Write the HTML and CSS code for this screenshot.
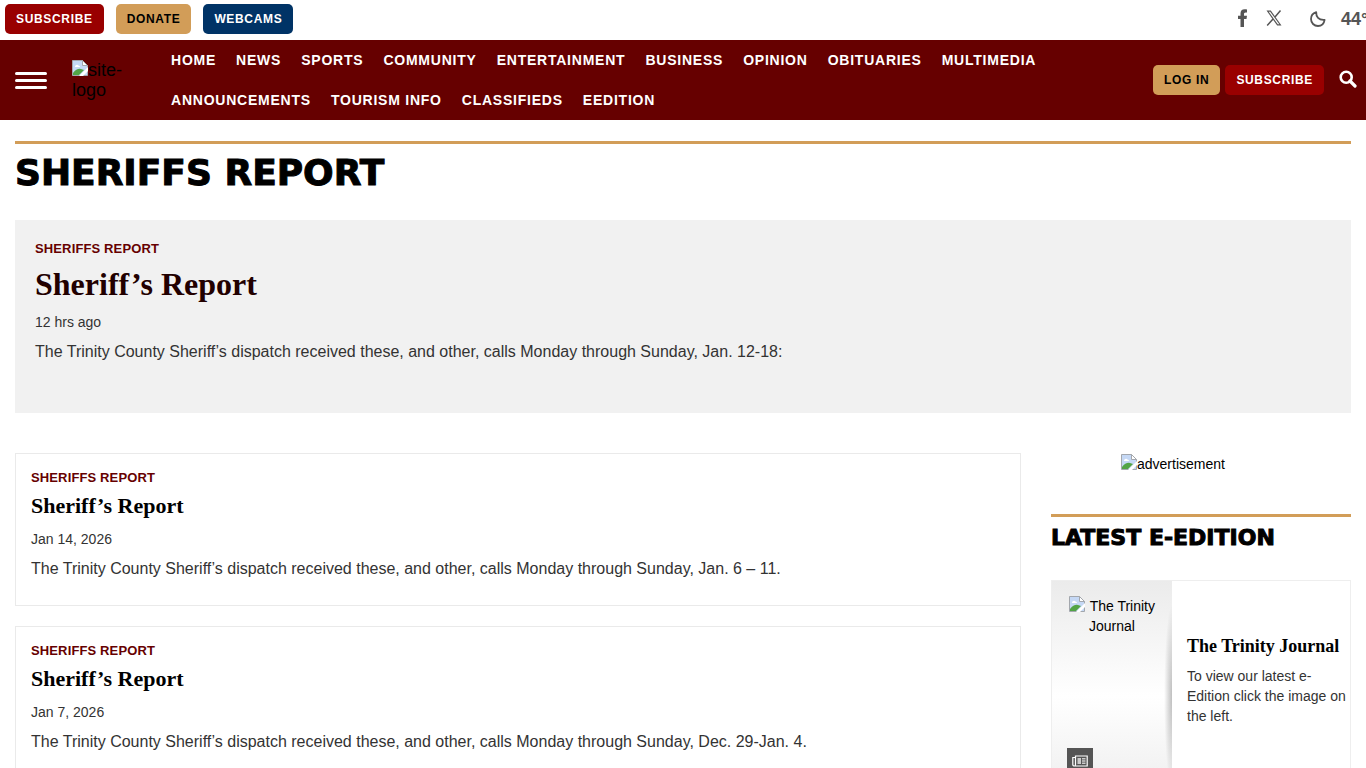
FILE: index.html
```html
<!DOCTYPE html>
<html lang="en">
<head>
<meta charset="utf-8">
<meta name="viewport" content="width=device-width, initial-scale=1">
<title>Sheriffs Report</title>
<link rel="stylesheet" href="styles.css">
</head>
<body>
<svg class="defs" aria-hidden="true">
  <symbol id="broken" viewBox="0 0 16 16">
    <path d="M.5 .5h10l5 5v10H.5z" fill="#c5d8f5" stroke="#a3a7ad"/>
    <path d="M10.500 .5v5h5z" fill="#fff" stroke="#a3a7ad"/>
    <path d="M3 7a2 2 0 0 1 3.500-1.500A1.500 1.500 0 0 1 8 7z" fill="#fff"/>
    <path d="M1 15v-2q4-5 8-4l3 1-5 5z" fill="#52a446"/>
    <path d="M7 16l9-9v4l-5 5z" fill="#fff"/>
  </symbol>
</svg>
<div class="topbar">
  <div class="topbar-links">
    <a class="btn btn-red" href="#">SUBSCRIBE</a>
    <a class="btn btn-gold" href="#">DONATE</a>
    <a class="btn btn-blue" href="#">WEBCAMS</a>
  </div>
  <div class="topbar-tools">
    <a class="social" href="#" aria-label="Facebook"><svg width="12" height="18" viewBox="0 0 12 18"><path d="M3.500 18v-8H1V6.700h2.500V4.500C3.500 1.800 5 .3 7.600.3c1.200 0 2.400.2 2.400.2v2.900H8.700c-1.300 0-1.700.8-1.700 1.600v1.700h3L9.500 10H7v8z" fill="#555"/></svg></a>
    <a class="social social-x" href="#" aria-label="X"><svg width="16" height="16" viewBox="0 0 16 16"><path d="M.5 .5h4.300L15.500 15.500h-4.300z" fill="#555"/><path d="M2.700 1.700h1.500l9.100 12.600h-1.500z" fill="#fff"/><path d="M14.500 .5 9 6.900M7 9l-5.800 6.500" fill="none" stroke="#555" stroke-width="1.500"/></svg></a>
    <svg width="16" height="16" viewBox="0 0 16 16" aria-hidden="true"><path d="M6.200 1.200C6 5.800 8.500 9.300 14.600 8.800 14 12.600 11.400 15 8 15c-3.900 0-7-3-7-6.900C1 5 3 2.200 6.200 1.200z" fill="none" stroke="#555" stroke-width="1.800" stroke-linejoin="round"/></svg>
    <span class="temp">44°</span>
  </div>
</div>
<header class="header">
  <button class="menu" type="button" aria-label="Menu"><span></span><span></span><span></span></button>
  <a class="logo" href="#"><svg width="16" height="16" aria-hidden="true"><use href="#broken"/></svg>site-logo</a>
  <nav class="nav">
    <a href="#">HOME</a><a href="#">NEWS</a><a href="#">SPORTS</a><a href="#">COMMUNITY</a><a href="#">ENTERTAINMENT</a><a href="#">BUSINESS</a><a href="#">OPINION</a><a href="#">OBITUARIES</a><a href="#">MULTIMEDIA</a><a href="#">ANNOUNCEMENTS</a><a href="#">TOURISM INFO</a><a href="#">CLASSIFIEDS</a><a href="#">EEDITION</a>
  </nav>
  <div class="account">
    <a class="btn btn-gold" href="#">LOG IN</a>
    <a class="btn btn-red" href="#">SUBSCRIBE</a>
    <button class="search" type="button" aria-label="Search"><svg width="18" height="18" viewBox="0 0 18 18"><circle cx="7.200" cy="7.200" r="5.500" fill="none" stroke="#fff" stroke-width="2.600"/><path d="M11 11l5 5" stroke="#fff" stroke-width="3.200" stroke-linecap="round"/></svg></button>
  </div>
</header>
<main class="main">
  <h1 class="page-title">SHERIFFS REPORT</h1>
  <article class="feature">
    <a class="label" href="#">SHERIFFS REPORT</a>
    <h2><a href="#">Sheriff’s Report</a></h2>
    <time>12 hrs ago</time>
    <p>The Trinity County Sheriff’s dispatch received these, and other, calls Monday through Sunday, Jan. 12-18:</p>
  </article>
  <div class="columns">
    <section class="list">
      <article class="card">
        <a class="label" href="#">SHERIFFS REPORT</a>
        <h3><a href="#">Sheriff’s Report</a></h3>
        <time>Jan 14, 2026</time>
        <p>The Trinity County Sheriff’s dispatch received these, and other, calls Monday through Sunday, Jan. 6 – 11.</p>
      </article>
      <article class="card">
        <a class="label" href="#">SHERIFFS REPORT</a>
        <h3><a href="#">Sheriff’s Report</a></h3>
        <time>Jan 7, 2026</time>
        <p>The Trinity County Sheriff’s dispatch received these, and other, calls Monday through Sunday, Dec. 29-Jan. 4.</p>
      </article>
    </section>
    <aside class="sidebar">
      <a class="ad" href="#"><svg width="16" height="16" aria-hidden="true"><use href="#broken"/></svg>advertisement</a>
      <h2 class="side-title">LATEST E-EDITION</h2>
      <div class="edition">
        <a class="cover" href="#">
          <span class="cover-alt"><svg width="16" height="16" aria-hidden="true"><use href="#broken"/></svg> The Trinity Journal</span>
          <span class="badge"><svg width="16" height="12" viewBox="0 0 16 12" aria-hidden="true"><path d="M3.500 1h11.700v10H2.500Q.8 11 .8 9.500V2.500h2.700z M3.500 2v7.500q0 1.500-1 1.500" fill="none" stroke="#fff" stroke-width="1.200"/><path d="M5.500 3h3.500v6H5.500zM10 3h3.500v1.500H10zM10 5.300h3.500v1.400H10zM10 7.500h3.500V9H10z" fill="#ccc"/></svg></span>
        </a>
        <div class="edition-text">
          <h3><a href="#">The Trinity Journal</a></h3>
          <p>To view our latest e-Edition click the image on the left.</p>
        </div>
      </div>
    </aside>
  </div>
</main>
</body>
</html>
```
FILE: styles.css
```css
* { box-sizing: border-box; }
html { overflow: hidden; }
body {
  margin: 0;
  background: #fff;
  color: #000;
  font: 14px/20px "Liberation Sans", Arial, sans-serif;
}
a { color: inherit; text-decoration: none; }
h1, h2, h3, p { margin: 0; }
svg { flex: none; }
.defs { display: none; }

.btn {
  display: inline-block;
  padding: 0 11px;
  border-radius: 5px;
  font-size: 12px;
  font-weight: bold;
  line-height: 30px;
  letter-spacing: .055em;
  white-space: nowrap;
}
.btn-red { background: #900; color: #fff; }
.btn-gold { background: #d29d58; color: #000; }
.btn-blue { background: #036; color: #fff; }

.topbar {
  display: flex;
  justify-content: space-between;
  align-items: flex-start;
  height: 40px;
  padding: 4px 0 0 5px;
  overflow: hidden;
}
.topbar-links { display: flex; gap: 12px; }
.topbar-tools { display: flex; align-items: center; height: 30px; color: #555; }
.topbar-tools > svg { margin-right: 15px; }
.social { display: flex; margin-right: 17px; padding-bottom: 2px; }
.social-x { margin-right: 28px; }
.temp { width: 25px; font-size: 18px; font-weight: bold; white-space: nowrap; }

.header {
  display: flex;
  align-items: center;
  min-height: 80px;
  padding-left: 15px;
  background: #600;
}
.menu {
  display: flex;
  flex-direction: column;
  gap: 4px;
  width: 32px;
  margin-right: 25px;
  padding: 0;
  border: 0;
  background: none;
}
.menu span { height: 3px; border-radius: 2px; background: #fff; }
.logo {
  width: 60px;
  margin-right: 39px;
  font-size: 18px;
  color: #000;
}
.logo svg, .ad svg, .cover-alt svg { vertical-align: top; }
.nav { display: flex; flex-wrap: wrap; flex: 1; column-gap: 20px; }
.nav a {
  color: #fff;
  font-weight: bold;
  line-height: 40px;
  letter-spacing: .055em;
  white-space: nowrap;
}
.account { display: flex; align-items: center; gap: 5px; padding-right: 9px; }
.search {
  display: flex;
  margin-left: 10px;
  padding: 0 0 2px;
  border: 0;
  background: none;
}

.main { padding: 21px 15px 0; }
.page-title, .side-title {
  border-top: 3px solid #d29d58;
  font-family: "DejaVu Sans", sans-serif;
  font-weight: bold;
  -webkit-text-stroke: 1px #000;
}
.page-title {
  padding-top: 9px;
  font-size: 36px;
  line-height: 40px;
}
.feature {
  margin-top: 27px;
  padding: 19px 20px 49px;
  background: #f1f1f1;
}
.label {
  display: block;
  color: #600;
  font-size: 13px;
  font-weight: bold;
  letter-spacing: .01em;
}
time { display: block; color: #333; }
.feature p, .card p { margin-top: 8px; color: #333; font-size: 16px; line-height: 24px; }
.feature h2, .card h3, .edition h3 { font-family: "Liberation Serif", "Times New Roman", serif; }
.feature h2 { margin: 7px 0 10px; color: #200; font-size: 32px; line-height: 36px; }

.columns {
  display: grid;
  grid-template-columns: 1fr 300px;
  gap: 30px;
  margin-top: 40px;
}
.list { display: flex; flex-direction: column; gap: 20px; }
.card {
  padding: 14px 15px 24px;
  border: 1px solid #eaeaea;
}
.card h3 { margin: 5px 0 10px; font-size: 22px; line-height: 26px; }

.ad { display: block; margin-left: 70px; padding-top: 1px; }
.side-title {
  margin-top: 40px;
  padding-top: 8px;
  font-size: 22px;
  line-height: 26px;
}
.edition {
  display: flex;
  height: 232px;
  margin-top: 29px;
  border: 1px solid #eee;
}
.cover {
  display: flex;
  flex-direction: column;
  justify-content: space-between;
  width: 120px;
  padding: 15px 15px 37px;
  background:
    radial-gradient(ellipse at 100% 50%, rgba(0, 0, 0, .25), transparent 70%) 100% 50% / 8px 80% no-repeat,
    linear-gradient(#ebebeb, #fff 50%, #ebebeb);
  text-align: center;
}
.cover-alt svg { margin-right: 1px; }
.badge {
  display: flex;
  align-items: center;
  justify-content: center;
  width: 26px;
  height: 26px;
  background: #555;
}
.edition-text { flex: 1; padding: 54px 0 0 15px; }
.edition-text h3 { font-size: 18px; line-height: 22px; white-space: nowrap; }
.edition-text p { margin-top: 9px; color: #333; }
```
